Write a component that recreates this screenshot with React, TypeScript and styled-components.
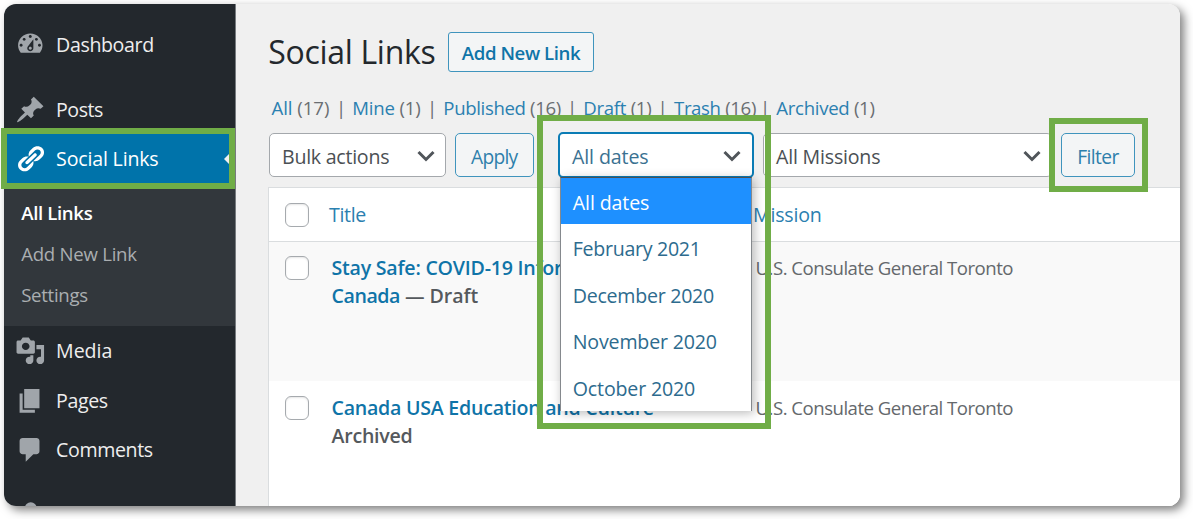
import React from "react";
import styled, { createGlobalStyle, css } from "styled-components";

const GlobalStyle = createGlobalStyle`
  * { box-sizing: border-box; }
  body { margin: 0; background: #fff; }
`;

const font = `"Open Sans", "Noto Sans", sans-serif`;

const Page = styled.div`
  position: relative;
  width: 1193px;
  height: 519px;
  padding: 4px 0 0 4px;
  overflow: hidden;
  font-family: ${font};
  font-size: 19.6px;
  color: #50575e;
`;

const Frame = styled.div`
  display: flex;
  width: 1176px;
  height: 502px;
  border-radius: 12px;
  box-shadow: 4px 4px 10px rgba(0, 0, 0, 0.5);
`;

const Clip = styled.div`
  display: flex;
  flex: 1;
  border-radius: 12px;
  overflow: hidden;
  background: #f0f0f0;
`;

const Text = styled.span<{ $track?: number }>`
  letter-spacing: ${(p) => p.$track ?? -0.2}px;
  white-space: nowrap;
`;

/* ---------- admin menu ---------- */

const Sidebar = styled.nav`
  flex: none;
  width: 232px;
  height: 502px;
  background: #23282d;
  border-right: 1px solid #777b7f;
  padding-top: 15.5px;
  overflow: hidden;
`;

const MenuItem = styled.div<{ $current?: boolean; $gapAfter?: number }>`
  display: flex;
  align-items: center;
  height: 49.4px;
  margin-bottom: ${(p) => p.$gapAfter ?? 0}px;
  padding-left: 10.8px;
  color: #eee;
  ${(p) =>
    p.$current &&
    css`
      width: 232px;
      color: #fff;
      background: #0073aa;
    `}
`;

const MenuLabel = styled(Text)`
  margin-left: 10.7px;
  padding-top: 0.8px;
  line-height: 28px;
`;

const Arrow = styled.i`
  margin-left: auto;
  border: 12px solid transparent;
  border-left-width: 0;
  border-right-color: #f0f0f0;
`;

const Glyph = styled.svg<{ $active?: boolean }>`
  flex: none;
  width: 30.6px;
  height: 29.6px;
  fill: ${(p) => (p.$active ? "#fff" : "#a0a5aa")};
`;

const Submenu = styled.div`
  display: flex;
  flex-direction: column;
  height: 142.6px;
  padding: 9.5px 0 0 17.2px;
  background: #32373c;
  font-size: 18.6px;
`;

const SubItem = styled(Text)<{ $current?: boolean }>`
  height: 40.7px;
  line-height: 40.7px;
  font-weight: ${(p) => (p.$current ? 600 : 400)};
  color: ${(p) => (p.$current ? "#fff" : "#aaaeb1")};
`;

/* ---------- content ---------- */

const Main = styled.main`
  flex: 1;
  display: flex;
  flex-direction: column;
  min-width: 0;
  padding-left: 31.5px;
`;

const Heading = styled.header`
  display: flex;
  flex: none;
  align-items: center;
  height: 68px;
  margin-top: 14px;
`;

const Title = styled.h1`
  margin: 0;
  width: 180.5px;
  padding-left: 0.7px;
  font-size: 32px;
  font-weight: 400;
  line-height: 44px;
  letter-spacing: -0.3px;
  color: #23282d;
  white-space: nowrap;
`;

const Button = styled.button<{ $w: number; $h: number; $strong?: boolean }>`
  display: flex;
  align-items: center;
  justify-content: center;
  flex: none;
  width: ${(p) => p.$w}px;
  height: ${(p) => p.$h}px;
  padding: ${(p) => (p.$strong ? 0 : 2)}px 0 0;
  border: 1.4px solid #3f94bd;
  border-radius: ${(p) => (p.$strong ? 3 : 5)}px;
  background: #f3f5f6;
  color: ${(p) => (p.$strong ? "#0f74a8" : "#2d7fab")};
  font-family: ${font};
  font-size: ${(p) => (p.$strong ? 18.6 : 19.2)}px;
  font-weight: ${(p) => (p.$strong ? 600 : 400)};
`;

const Views = styled.div`
  display: flex;
  flex: none;
  height: 26px;
  margin: 8.5px 0 0 4px;
  font-size: 18.6px;
  line-height: 26px;
  color: #6a6e72;
`;

const View = styled.div<{ $w: number }>`
  display: flex;
  justify-content: space-between;
  width: ${(p) => p.$w}px;
  padding-right: 6.2px;
`;

const Link = styled.span`
  color: #2b80b0;
`;

const Controls = styled.div`
  display: flex;
  flex: none;
  align-items: center;
  height: 46px;
  margin-top: 11.5px;
  padding-left: 1.5px;
`;

const Select = styled.div<{ $w: number; $gap: number; $open?: boolean }>`
  position: relative;
  display: flex;
  align-items: center;
  justify-content: space-between;
  flex: none;
  width: ${(p) => p.$w}px;
  height: ${(p) => (p.$open ? 46 : 44)}px;
  margin-right: ${(p) => p.$gap}px;
  padding: 3px ${(p) => (p.$open ? 10 : 9)}px 0 12px;
  border: ${(p) => (p.$open ? "2px solid #0b7cb5" : "1.5px solid #a4a8ac")};
  border-radius: 5px;
  background: #fff;
  color: ${(p) => (p.$open ? "#3a7191" : "#4b5054")};
  line-height: 28px;
`;

const Chevron = styled.svg`
  width: 20px;
  height: 14px;
  fill: none;
  stroke: #50555a;
  stroke-width: 3;
`;

const Spacer = styled.i<{ $w: number }>`
  flex: none;
  width: ${(p) => p.$w}px;
`;

const Menu = styled.div`
  position: absolute;
  z-index: 2;
  left: 0;
  top: 43px;
  display: flex;
  flex-direction: column;
  width: 192px;
  height: 234px;
  border: 1px solid #85898d;
  border-top-color: #4d4f51;
  border-bottom: 0;
  background: #fff;
  box-shadow: 2px 2px 10px rgba(0, 0, 0, 0.28);
`;

const Option = styled(Text)<{ $on?: boolean }>`
  height: 46.4px;
  padding-left: 11.8px;
  line-height: 49px;
  color: ${(p) => (p.$on ? "#fff" : "#2d6b8e")};
  background: ${(p) => (p.$on ? "#1e90ff" : "#fff")};
`;

/* ---------- list table ---------- */

const Table = styled.section`
  flex: 1 1 0;
  min-height: 0;
  margin-top: 9px;
  border: 1.5px solid #dadddf;
  border-width: 1.5px 0 0 1.5px;
  background: #fff;
`;

const Row = styled.div<{ $h: number; $head?: boolean; $alt?: boolean }>`
  display: grid;
  grid-template-columns: 63px 424px 1fr;
  height: ${(p) => p.$h}px;
  padding-top: ${(p) => (p.$head ? 13 : p.$alt ? 12 : 12.7)}px;
  background: ${(p) => (p.$alt ? "#f9f9f9" : "#fff")};
  border-bottom: ${(p) => (p.$head ? "1.5px solid #dadddf" : "0")};
  line-height: 28px;
`;

const Checkbox = styled.i<{ $top: number }>`
  width: 24px;
  height: 24px;
  margin: ${(p) => p.$top}px 0 0 16.3px;
  border: 1.5px solid #a6aaae;
  border-radius: 6px;
  background: #fff;
  box-shadow: inset 0 1px 2px rgba(0, 0, 0, 0.1);
`;

const HeadCell = styled(Text)`
  margin-left: -2.5px;
  color: #2b80b0;
`;

const TitleCell = styled.div`
  display: flex;
  flex-direction: column;
  font-weight: 600;
  color: #55595d;
`;

const RowLink = styled(Text)`
  color: #0f74a8;
`;

const MissionCell = styled(Text)`
  font-size: 18.6px;
  color: #64686c;
`;

/* ---------- callouts ---------- */

const Callout = styled.div<{ $x: number; $y: number; $w: number; $h: number }>`
  position: absolute;
  z-index: 5;
  left: ${(p) => p.$x}px;
  top: ${(p) => p.$y}px;
  width: ${(p) => p.$w}px;
  height: ${(p) => p.$h}px;
  border: 6px solid #70ad47;
`;

const icons = {
  dashboard:
    "M3.76 16h12.48c1.1-1.37 1.76-3.11 1.76-5 0-4.42-3.58-8-8-8s-8 3.58-8 8c0 1.89.66 3.63 1.76 5zM10 4c.55 0 1 .45 1 1s-.45 1-1 1-1-.45-1-1 .45-1 1-1zM6 6c.55 0 1 .45 1 1s-.45 1-1 1-1-.45-1-1 .45-1 1-1zm8 0c.55 0 1 .45 1 1s-.45 1-1 1-1-.45-1-1 .45-1 1-1zm-5.37 5.55L12 7v6c0 1.1-.9 2-2 2s-2-.9-2-2c0-.57.24-1.08.63-1.45zM4 10c.55 0 1 .45 1 1s-.45 1-1 1-1-.45-1-1 .45-1 1-1zm12 0c.55 0 1 .45 1 1s-.45 1-1 1-1-.45-1-1 .45-1 1-1zm-5 3c0-.55-.45-1-1-1s-1 .45-1 1 .45 1 1 1 1-.45 1-1z",
  posts:
    "M10.44 3.02l1.82-1.82 6.36 6.35-1.83 1.82c-1.05-.68-2.48-.57-3.41.36l-.75.75c-.92.93-1.04 2.35-.35 3.41l-1.83 1.82-2.41-2.41-2.8 2.79c-.42.42-3.38 2.71-3.8 2.29s1.86-3.39 2.28-3.81l2.79-2.79L4.1 9.36l1.83-1.82c1.05.69 2.48.57 3.4-.36l.75-.75c.93-.92 1.05-2.35.36-3.41z",
  links:
    "M17.74 2.76c1.68 1.69 1.68 4.41 0 6.1l-1.53 1.52c-1.12 1.12-2.7 1.47-4.14 1.09l2.62-2.61.76-.77.76-.76c.84-.84.84-2.2 0-3.04-.84-.85-2.2-.85-3.04 0l-.77.76-3.38 3.38c-.37-1.44-.02-3.02 1.1-4.14l1.52-1.53c1.69-1.68 4.42-1.68 6.1 0zM8.59 13.43l5.34-5.34c.42-.42.42-1.1 0-1.52-.44-.43-1.13-.39-1.53 0l-5.33 5.34c-.42.42-.42 1.1 0 1.52.44.43 1.13.39 1.52 0zm-.76 2.29l4.14-4.15c.38 1.44.03 3.02-1.09 4.14l-1.52 1.53c-1.69 1.68-4.41 1.68-6.1 0-1.68-1.68-1.68-4.42 0-6.1l1.53-1.52c1.12-1.12 2.7-1.47 4.14-1.1l-4.14 4.15c-.85.84-.85 2.2 0 3.05.84.84 2.2.84 3.04 0z",
  media:
    "M13 11V4c0-.55-.45-1-1-1h-1.67L9 1H5L3.67 3H2c-.55 0-1 .45-1 1v7c0 .55.45 1 1 1h10c.55 0 1-.45 1-1zM7 4.5c1.38 0 2.5 1.12 2.5 2.5S8.38 9.5 7 9.5 4.5 8.38 4.5 7 5.62 4.5 7 4.5zM14 6h5v10.5c0 1.38-1.12 2.5-2.5 2.5S14 17.88 14 16.5s1.12-2.5 2.5-2.5c.17 0 .34.02.5.05V9h-3V6zm-4 8.05V13h2v3.5c0 1.38-1.12 2.5-2.5 2.5S7 17.88 7 16.5 8.12 14 9.5 14c.17 0 .34.02.5.05z",
  pages: "M6 15V2h10v13H6zm-1 1h8v2H3V5h2v11z",
  comments:
    "M5 2h9c1.1 0 2 .9 2 2v7c0 1.1-.9 2-2 2h-2l-5 5v-5H5c-1.1 0-2-.9-2-2V4c0-1.1.9-2 2-2z",
  appearance: "M10.3 1.6a3.9 3.9 0 1 1 0 7.8 3.9 3.9 0 0 1 0-7.8z",
};

const Icon = ({ name, active }: { name: keyof typeof icons; active?: boolean }) => (
  <Glyph viewBox="0 0 20 20" preserveAspectRatio="none" $active={active}>
    <path fillRule="evenodd" d={icons[name]} />
  </Glyph>
);

const Item = ({
  icon,
  label,
  track,
  gapAfter,
  current,
}: {
  icon: keyof typeof icons;
  label?: string;
  track?: number;
  gapAfter?: number;
  current?: boolean;
}) => (
  <MenuItem $current={current} $gapAfter={gapAfter}>
    <Icon name={icon} active={current} />
    {label && <MenuLabel $track={track}>{label}</MenuLabel>}
    {current && <Arrow />}
  </MenuItem>
);

const Caret = () => (
  <Chevron viewBox="0 0 20 14">
    <path d="M2.5 2l7.5 7.5L17.5 2" />
  </Chevron>
);

const views = [
  { label: "All", count: 17, w: 80.8, track: -0.05 },
  { label: "Mine", count: 1, w: 91, track: -0.2 },
  { label: "Published", count: 16, w: 140, track: -0.35 },
  { label: "Draft", count: 1, w: 90.7, track: -0.3 },
  { label: "Trash", count: 16, w: 102.3, track: -0.35 },
  { label: "Archived", count: 1, w: 110, track: -0.3 },
];

const months = [
  { label: "All dates", track: -0.12 },
  { label: "February 2021", track: -0.3 },
  { label: "December 2020", track: -0.27 },
  { label: "November 2020", track: -0.18 },
  { label: "October 2020", track: -0.17 },
];

export default function App() {
  return (
    <>
      <GlobalStyle />
      <Page>
        <Frame>
          <Clip>
            <Sidebar>
              <Item icon="dashboard" label="Dashboard" track={-0.38} gapAfter={16} />
              <Item icon="posts" label="Posts" track={-0.5} />
              <Item icon="links" label="Social Links" track={-0.18} current />
              <Submenu>
                <SubItem $current $track={-0.35}>All Links</SubItem>
                <SubItem $track={-0.25}>Add New Link</SubItem>
                <SubItem $track={-0.28}>Settings</SubItem>
              </Submenu>
              <Item icon="media" label="Media" track={-0.05} />
              <Item icon="pages" label="Pages" track={-0.4} />
              <Item icon="comments" label="Comments" track={-0.38} gapAfter={16} />
              <Item icon="appearance" />
            </Sidebar>
            <Main>
              <Heading>
                <Title>Social Links</Title>
                <Button $w={146} $h={40} $strong>
                  <Text $track={-0.42}>Add New Link</Text>
                </Button>
              </Heading>
              <Views>
                {views.map((v, i) => (
                  <View key={v.label} $w={v.w}>
                    <Text $track={v.track}>
                      <Link>{v.label}</Link> ({v.count})
                    </Text>
                    {i < views.length - 1 && <span>|</span>}
                  </View>
                ))}
              </Views>
              <Controls>
                <Select $w={177} $gap={8.5}>
                  <Text $track={-0.26}>Bulk actions</Text>
                  <Caret />
                </Select>
                <Button $w={79.5} $h={44}>
                  <Text $track={-0.7}>Apply</Text>
                </Button>
                <Spacer $w={24} />
                <Select $w={196} $gap={9} $open>
                  <Text $track={-0.12}>All dates</Text>
                  <Caret />
                  <Menu>
                    {months.map((m, i) => (
                      <Option key={m.label} $on={i === 0} $track={m.track}>
                        {m.label}
                      </Option>
                    ))}
                  </Menu>
                </Select>
                <Select $w={289} $gap={9}>
                  <Text $track={-0.2}>All Missions</Text>
                  <Caret />
                </Select>
                <Button $w={74} $h={44}>
                  <Text $track={-0.6}>Filter</Text>
                </Button>
              </Controls>
              <Table>
                <Row $h={53.5} $head>
                  <Checkbox $top={1.5} />
                  <HeadCell $track={-0.35}>Title</HeadCell>
                  <HeadCell $track={-0.2}>Mission</HeadCell>
                </Row>
                <Row $h={139.5} $alt>
                  <Checkbox $top={2.5} />
                  <TitleCell>
                    <RowLink $track={-0.23}>Stay Safe: COVID-19 Information</RowLink>
                    <Text $track={-0.06}>
                      <RowLink $track={-0.45}>Canada</RowLink> — Draft
                    </Text>
                  </TitleCell>
                  <MissionCell $track={-0.5}>U.S. Consulate General Toronto</MissionCell>
                </Row>
                <Row $h={139.5}>
                  <Checkbox $top={2.3} />
                  <TitleCell>
                    <RowLink $track={-0.25}>Canada USA Education and Culture</RowLink>
                    <Text $track={-0.25}>Archived</Text>
                  </TitleCell>
                  <MissionCell $track={-0.5}>U.S. Consulate General Toronto</MissionCell>
                </Row>
              </Table>
            </Main>
          </Clip>
        </Frame>
        <Callout $x={1} $y={128} $w={234} $h={61} />
        <Callout $x={537} $y={115} $w={234} $h={314} />
        <Callout $x={1049} $y={118} $w={99} $h={74} />
      </Page>
    </>
  );
}
